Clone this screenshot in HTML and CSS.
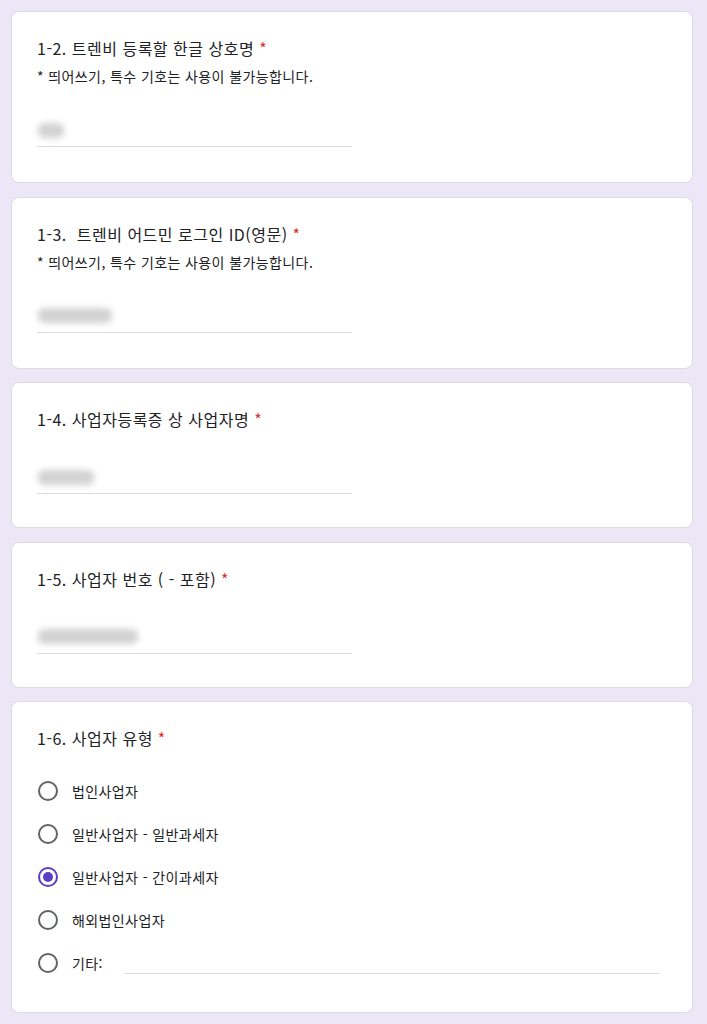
FILE: index.html
```html
<!DOCTYPE html>
<html lang="ko">
<head>
    <meta charset="UTF-8">
    <meta name="viewport" content="width=device-width, initial-scale=1.0">
    <title>트렌비 입점 신청</title>
    <link rel="stylesheet" href="styles.css">
</head>
<body>
<div class="form">
    <div class="card">
        <div class="question-title">1-2. 트렌비 등록할 한글 상호명 <span class="required">*</span></div>
        <div class="question-desc">* 띄어쓰기, 특수 기호는 사용이 불가능합니다.</div>
        <div class="text-answer">
            <span class="blurred" style="width: 26px;"></span>
        </div>
    </div>

    <div class="card">
        <div class="question-title">1-3.&nbsp; 트렌비 어드민 로그인 ID(영문) <span class="required">*</span></div>
        <div class="question-desc">* 띄어쓰기, 특수 기호는 사용이 불가능합니다.</div>
        <div class="text-answer">
            <span class="blurred" style="width: 74px;"></span>
        </div>
    </div>

    <div class="card">
        <div class="question-title">1-4. 사업자등록증 상 사업자명 <span class="required">*</span></div>
        <div class="text-answer no-desc">
            <span class="blurred" style="width: 56px;"></span>
        </div>
    </div>

    <div class="card">
        <div class="question-title">1-5. 사업자 번호 ( - 포함) <span class="required">*</span></div>
        <div class="text-answer no-desc">
            <span class="blurred" style="width: 100px;"></span>
        </div>
    </div>

    <div class="card">
        <div class="question-title">1-6. 사업자 유형 <span class="required">*</span></div>
        <div class="radio-list">
            <label class="radio-row">
                <span class="radio"></span>
                <span class="radio-label">법인사업자</span>
            </label>
            <label class="radio-row">
                <span class="radio"></span>
                <span class="radio-label">일반사업자 - 일반과세자</span>
            </label>
            <label class="radio-row">
                <span class="radio checked"></span>
                <span class="radio-label">일반사업자 - 간이과세자</span>
            </label>
            <label class="radio-row">
                <span class="radio"></span>
                <span class="radio-label">해외법인사업자</span>
            </label>
            <label class="radio-row">
                <span class="radio"></span>
                <span class="radio-label">기타:</span>
                <span class="other-input"></span>
            </label>
        </div>
    </div>
</div>
</body>
</html>
```

FILE: styles.css
```css
body {
    margin: 0;
    padding: 0;
    background-color: #ebe7f6; /* lavender */
    font-family: "Noto Sans CJK KR", "Noto Sans", Arial, sans-serif;
    color: #202124;
}
.form {
    display: flex;
    flex-direction: column;
    gap: 13.5px;
    padding: 11px 14px 20px 11px;
}
.card {
    background: #ffffff;
    border: 1px solid #dadce0;
    border-radius: 8px;
    padding: 24px 26px 35px 25px;
}
.question-title {
    font-size: 16px;
    line-height: 24px;
    letter-spacing: 0.5px;
}
.required {
    color: #d93025;
}
.question-desc {
    margin-top: 6px;
    font-size: 14px;
    line-height: 20px;
    letter-spacing: 0.4px;
}
.text-answer {
    display: flex;
    align-items: center;
    width: 315px;
    height: 32px;
    margin-top: 28px;
    border-bottom: 1px solid #dadce0;
}
.text-answer.no-desc {
    margin-top: 30px;
    margin-bottom: -2px;
}
.blurred {
    display: block;
    height: 15px;
    margin-left: 1px;
    background: #d2d2d2;
    border-radius: 6px;
    filter: blur(3px);
}
.radio-list {
    display: flex;
    flex-direction: column;
    margin-top: 19px;
    margin-bottom: -7px;
}
.radio-row {
    display: flex;
    align-items: center;
    height: 43px;
}
.radio {
    box-sizing: border-box;
    width: 20px;
    height: 20px;
    margin-left: 1px;
    border: 2px solid #5f6368;
    border-radius: 50%;
    display: flex;
    align-items: center;
    justify-content: center;
    flex-shrink: 0;
}
.radio.checked {
    border-color: #5b3fc2;
}
.radio.checked::after {
    content: "";
    width: 10px;
    height: 10px;
    border-radius: 50%;
    background: #5b3fc2;
}
.radio-label {
    margin-left: 14px;
    font-size: 14px;
    letter-spacing: 0.4px;
}
.other-input {
    align-self: flex-end;
    margin: 0 0 10px 21px;
    width: 536px;
    border-bottom: 1px solid #dadce0;
}
```
